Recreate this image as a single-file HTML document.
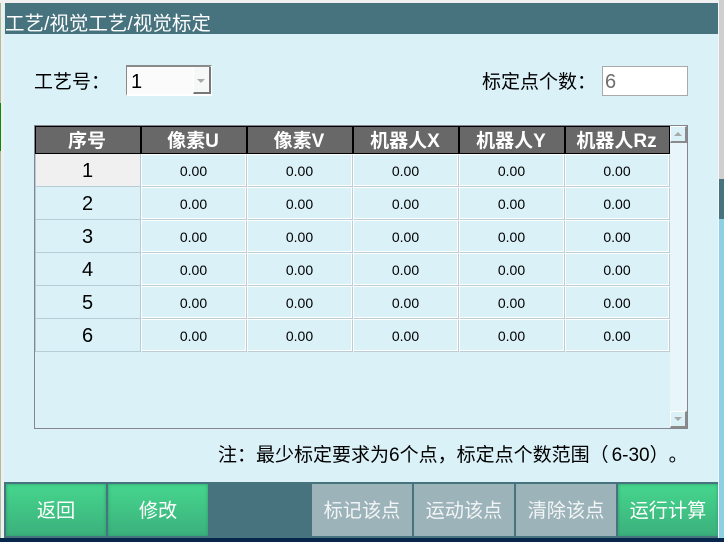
<!DOCTYPE html>
<html><head><meta charset="utf-8">
<style>
html,body{margin:0;padding:0;}
body{width:724px;height:542px;position:relative;overflow:hidden;background:#fff;font-family:"Liberation Sans","Noto Sans CJK SC",sans-serif;color:#000;text-spacing-trim:space-all;}
div{position:absolute;box-sizing:border-box;}
.t{white-space:nowrap;line-height:20px;}
.hd{top:127px;height:26px;background:#686868;color:#fff;font-size:19px;font-weight:bold;text-align:center;line-height:29px;}
.hd span{position:relative;left:-1px;}
.c{top:0;height:32px;background:#daf1f8;text-align:center;font-size:14px;line-height:33px;border:1px solid #fff;box-shadow:1px 1px 0 #bccdd5;}
.n{left:36px;width:104px;height:33px;background:#daf1f8;border-bottom:1px solid #b8ccd6;text-align:center;font-size:20px;line-height:34px;text-indent:-1px;}
.b{top:484px;width:100px;height:52px;color:#fff;font-size:19.2px;text-align:center;line-height:56px;}
.g{background:linear-gradient(#46d68d,#3bb07c);box-shadow:inset 0 0 3px #2f9a6e;}
.d{background:#9db3ba;color:#f2f5f6;}
</style></head><body>
<div style="left:0;top:0;width:1px;height:542px;background:#a9c0a0"></div>
<div style="left:0;top:103px;width:1px;height:48px;background:#0a8a0a"></div>
<div style="left:0;top:0;width:724px;height:3px;background:#f0f0f0"></div>
<div style="left:1px;top:3px;width:3px;height:535px;background:#eef0f0"></div>
<div style="left:4px;top:3px;width:714px;height:535px;background:#daf1f8"></div>
<div style="left:718px;top:3px;width:3px;height:535px;background:#f4f6f7"></div>
<div style="left:719px;top:0;width:5px;height:179px;background:#cfcfcf"></div>
<div style="left:719px;top:179px;width:5px;height:40px;background:#47737f"></div>
<div style="left:719px;top:219px;width:5px;height:323px;background:#8ecfe4"></div>
<div style="left:5px;top:3px;width:713px;height:31px;background:#47737f"></div>
<div class="t" style="left:5px;top:14px;color:#fff;font-size:19.5px">工艺/视觉工艺/视觉标定</div>

<div class="t" style="left:34px;top:73px;font-size:19px">工艺号：</div>
<div style="left:126px;top:65px;width:86px;height:31px;background:#fbfbfb;border:2px solid #8a8a8a;border-right-color:#fff;border-bottom-color:#fff;border-left-width:1px"></div>
<div style="left:193px;top:67px;width:18px;height:27px;background:#f6f8f8;border-right:2px solid #777;border-bottom:2px solid #777;border-left:1px solid #fff"></div>
<div style="left:197px;top:79px;width:0;height:0;border-left:4px solid transparent;border-right:4px solid transparent;border-top:4px solid #a8a8a8"></div>
<div class="t" style="left:131px;top:72px;font-size:20px">1</div>

<div class="t" style="left:482px;top:73px;font-size:19px">标定点个数：</div>
<div style="left:602px;top:66px;width:86px;height:30px;background:#fff;border:1px solid #a9a9a9"></div>
<div class="t" style="left:605px;top:72px;font-size:20px;color:#6d6d6d">6</div>

<div style="left:34px;top:125px;width:654px;height:304px;border:1px solid #85858f;border-top-width:2px"></div>
<div style="left:35px;top:126px;width:635px;height:28px;background:#000"></div>
<div class="hd" style="left:36px;width:104px"><span>序号</span></div>
<div class="hd" style="left:142px;width:104px"><span>像素U</span></div>
<div class="hd" style="left:248px;width:104px"><span>像素V</span></div>
<div class="hd" style="left:354px;width:104px"><span>机器人X</span></div>
<div class="hd" style="left:460px;width:104px"><span>机器人Y</span></div>
<div class="hd" style="left:566px;width:103px"><span>机器人Rz</span></div>

<div style="left:35px;top:154px;width:1px;height:198px;background:#b8ccd6"></div>
<div style="left:140px;top:154px;width:1px;height:198px;background:#b8ccd6"></div>
<div class="n" style="top:154px;background:#f0f0f0">1</div>
<div class="n" style="top:187px">2</div>
<div class="n" style="top:220px">3</div>
<div class="n" style="top:253px">4</div>
<div class="n" style="top:286px">5</div>
<div class="n" style="top:319px">6</div>

<div class="c" style="left:141px;top:154px;width:105px">0.00</div><div class="c" style="left:247px;top:154px;width:105px">0.00</div><div class="c" style="left:353px;top:154px;width:105px">0.00</div><div class="c" style="left:459px;top:154px;width:105px">0.00</div><div class="c" style="left:565px;top:154px;width:104px">0.00</div>
<div class="c" style="left:141px;top:187px;width:105px">0.00</div><div class="c" style="left:247px;top:187px;width:105px">0.00</div><div class="c" style="left:353px;top:187px;width:105px">0.00</div><div class="c" style="left:459px;top:187px;width:105px">0.00</div><div class="c" style="left:565px;top:187px;width:104px">0.00</div>
<div class="c" style="left:141px;top:220px;width:105px">0.00</div><div class="c" style="left:247px;top:220px;width:105px">0.00</div><div class="c" style="left:353px;top:220px;width:105px">0.00</div><div class="c" style="left:459px;top:220px;width:105px">0.00</div><div class="c" style="left:565px;top:220px;width:104px">0.00</div>
<div class="c" style="left:141px;top:253px;width:105px">0.00</div><div class="c" style="left:247px;top:253px;width:105px">0.00</div><div class="c" style="left:353px;top:253px;width:105px">0.00</div><div class="c" style="left:459px;top:253px;width:105px">0.00</div><div class="c" style="left:565px;top:253px;width:104px">0.00</div>
<div class="c" style="left:141px;top:286px;width:105px">0.00</div><div class="c" style="left:247px;top:286px;width:105px">0.00</div><div class="c" style="left:353px;top:286px;width:105px">0.00</div><div class="c" style="left:459px;top:286px;width:105px">0.00</div><div class="c" style="left:565px;top:286px;width:104px">0.00</div>
<div class="c" style="left:141px;top:319px;width:105px">0.00</div><div class="c" style="left:247px;top:319px;width:105px">0.00</div><div class="c" style="left:353px;top:319px;width:105px">0.00</div><div class="c" style="left:459px;top:319px;width:105px">0.00</div><div class="c" style="left:565px;top:319px;width:104px">0.00</div>

<div style="left:670px;top:127px;width:17px;height:301px;background:#e8f6fa"></div>
<div style="left:670px;top:126px;width:17px;height:17px;background:#daf1f8;border:1px solid #fff;border-right:2px solid #8a8a8a;border-bottom:2px solid #8a8a8a"></div>
<div style="left:674px;top:132px;width:0;height:0;border-left:4px solid transparent;border-right:4px solid transparent;border-bottom:4px solid #a8a8a8"></div>
<div style="left:670px;top:411px;width:17px;height:17px;background:#daf1f8;border:1px solid #fff;border-right:2px solid #8a8a8a;border-bottom:2px solid #8a8a8a"></div>
<div style="left:674px;top:417px;width:0;height:0;border-left:4px solid transparent;border-right:4px solid transparent;border-top:4px solid #a8a8a8"></div>

<div class="t" style="left:218px;top:446px;font-size:19px">注：最少标定要求为6个点，标定点个数范围（<span style="margin-left:3px">6-30</span>）。</div>

<div style="left:4px;top:482px;width:714px;height:56px;background:#47737f"></div>
<div class="b g" style="left:6px">返回</div>
<div class="b g" style="left:108px">修改</div>
<div class="b d" style="left:312px">标记该点</div>
<div class="b d" style="left:414px">运动该点</div>
<div class="b d" style="left:516px">清除该点</div>
<div class="b g" style="left:618px">运行计算</div>
<div style="left:0;top:538px;width:724px;height:4px;background:#06274a"></div>
</body></html>
